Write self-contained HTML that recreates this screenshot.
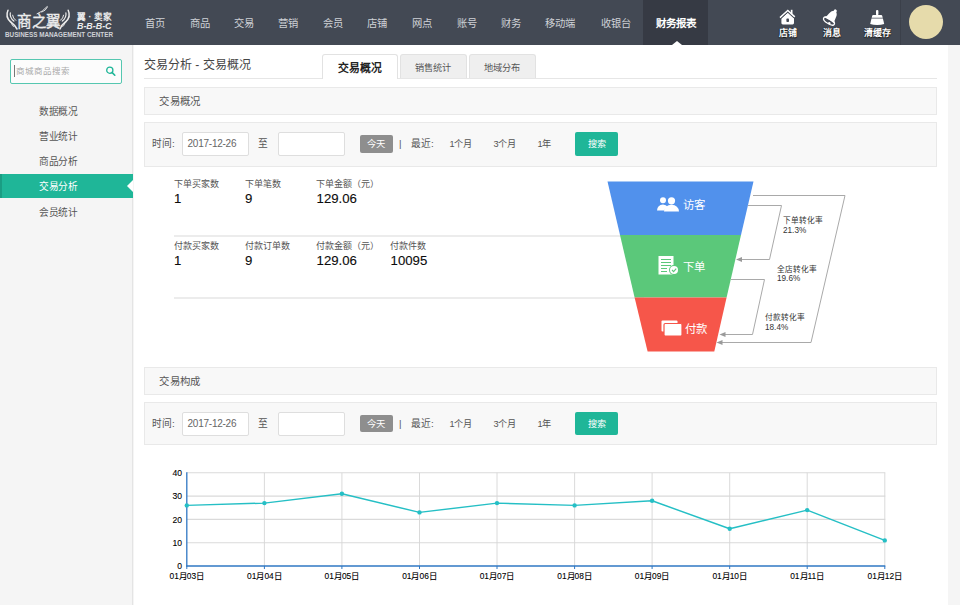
<!DOCTYPE html>
<html lang="zh-CN">
<head>
<meta charset="utf-8">
<title>交易分析 - 交易概况</title>
<style>
*{margin:0;padding:0;box-sizing:border-box;}
html,body{width:960px;height:605px;overflow:hidden;background:#f5f5f5;}
body{font-family:"Liberation Sans",sans-serif;font-size:11px;color:#555;position:relative;}
.abs{position:absolute;}
/* top nav */
#nav{position:absolute;left:0;top:0;width:960px;height:45px;background:#434954;}
#nav .it{position:absolute;top:0;height:45px;line-height:48px;color:#cfd2d7;font-size:10.3px;text-align:center;white-space:nowrap;transform:translateX(-50%);}
#nav .act{position:absolute;left:643px;top:0;width:65px;height:45px;background:#363a44;color:#fff;font-weight:bold;font-size:10.5px;line-height:46px;text-align:center;}
#nav .tri{position:absolute;left:671.5px;top:41px;width:0;height:0;border-left:5px solid transparent;border-right:5px solid transparent;border-bottom:4px solid #fff;}
#nav .ric{position:absolute;top:26.6px;color:#fff;font-size:9px;text-shadow:0 0 1px #000,0 1px 1px #111;font-weight:bold;line-height:12px;white-space:nowrap;transform:translateX(-50%);}
#nav .sep{position:absolute;left:900px;top:0;width:1px;height:45px;background:#3b404a;}
#nav .av{position:absolute;left:909px;top:5px;width:34px;height:34px;border-radius:50%;background:#e6dbab;}
/* sidebar */
#side{position:absolute;left:0;top:45px;width:133px;height:560px;background:#f5f5f5;border-right:1px solid #e4e4e4;}
#side .sb{position:absolute;left:10px;top:14px;width:112px;height:25px;border:1px solid #55c7b0;border-radius:2px;background:#fcfcfc;}
#side .sb span{position:absolute;left:4.6px;top:0;line-height:22.6px;font-size:8.5px;color:#aaa;white-space:nowrap;}
#side .sb i{position:absolute;left:3px;top:5px;width:1px;height:12px;background:#777;}
#side .notch{position:absolute;left:127px;top:135px;width:0;height:0;border-top:6px solid transparent;border-bottom:6px solid transparent;border-right:6px solid #fff;}
#side .m{position:absolute;left:39.3px;font-size:9.7px;letter-spacing:-0.4px;color:#555;line-height:14px;white-space:nowrap;}
#side .on{position:absolute;left:0;top:129px;width:133px;height:24px;background:#1fb698;border-left:2px solid #1a9d83;}
/* main */
#main{position:absolute;left:134px;top:45px;width:814px;height:560px;background:#fff;}
.h1{position:absolute;left:144px;top:57px;font-size:12px;color:#444;line-height:16px;white-space:nowrap;}
.tabline{position:absolute;left:144px;top:78px;width:793px;height:1px;background:#e6e6e6;}
.tab{position:absolute;top:54px;height:24px;border:1px solid #e2e2e2;border-bottom:none;background:#efefef;font-size:9.2px;line-height:26px;text-align:center;color:#555;border-radius:3px 3px 0 0;white-space:nowrap;}
.tab.a{background:#fff;height:25px;color:#222;font-weight:bold;font-size:10.8px;line-height:26px;}
.box{position:absolute;left:144px;width:793px;background:#f8f8f8;border:1px solid #e9e9e9;}
.box .t{position:absolute;left:14.2px;top:0;font-size:10.4px;letter-spacing:0.4px;color:#555;white-space:nowrap;}
.f{position:absolute;font-size:9.7px;color:#555;line-height:14px;white-space:nowrap;}
.inp{position:absolute;width:67px;height:24px;border:1px solid #dedede;border-radius:2px;background:#fff;font-size:10px;letter-spacing:-0.24px;color:#666;line-height:22px;padding-left:5px;}
.btn1{position:absolute;width:32.5px;height:17.5px;background:#8e8e8e;color:#fff;font-size:9.4px;line-height:18px;text-align:center;border-radius:2px;}
.btn2{position:absolute;width:43px;height:23.5px;background:#1fb698;color:#fff;font-size:9.2px;line-height:24px;text-align:center;border-radius:2px;}
.lab{position:absolute;font-size:9px;color:#555;line-height:12px;white-space:nowrap;}
.val{position:absolute;font-size:13.2px;color:#0c0c0c;line-height:15px;white-space:nowrap;-webkit-text-stroke:0.12px #0c0c0c;}
.hr{position:absolute;left:174px;height:1.5px;background:#ececec;}
</style>
</head>
<body>
<div id="nav">
  <svg class="abs" style="left:0;top:0" width="960" height="45" viewBox="0 0 960 45">
    <!-- logo wings -->
    <g fill="none" stroke="#ececec" stroke-linecap="round">
      <path d="M8 10.2 q-3 6.5 2.5 11.5 q4 3.2 6.5 7.3" stroke-width="1.5"/>
      <path d="M10.3 12.8 q-0.8 4.6 3.6 8.2" stroke-width="1.2"/>
      <path d="M12.6 15.2 q0.2 3 3.2 5.2" stroke-width="1"/>
      <path d="M9.6 20.5 q0.2 2.6 2.2 3.2 M11.8 24.3 q0.4 1.8 1.8 2.2" stroke-width="0.9"/>
      <path d="M68.2 10.2 q3 6.5 -2.5 11.5 q-4 3.2 -5.7 7.3" stroke-width="1.5"/>
      <path d="M65.9 12.8 q0.8 4.6 -3.6 8.2" stroke-width="1.2"/>
      <path d="M63.6 15.2 q-0.2 3 -3.2 5.2" stroke-width="1"/>
      <path d="M66.6 20.5 q-0.2 2.6 -2.2 3.2 M64.4 24.3 q-0.4 1.8 -1.8 2.2" stroke-width="0.9"/>
      <path d="M37 13.8 q6-2.4 9.4-6.6 q1.4-1.4 1-0.1 q-1.6 3.6-5.6 5" stroke-width="0.9"/>
    </g>
    <g fill="#ececec" font-family="'Liberation Sans',sans-serif">
      <text x="17" y="27.3" font-size="16" textLength="43.5" lengthAdjust="spacingAndGlyphs" stroke="#ececec" stroke-width="0.35">商之翼</text>
      <g font-weight="bold">
      <text x="77.3" y="20.3" font-size="8.8" textLength="34" lengthAdjust="spacingAndGlyphs">翼 · 卖家</text>
      <text x="77" y="28.5" font-size="8.3" font-style="italic" textLength="34.5" lengthAdjust="spacingAndGlyphs">B-B-B-C</text>
      <text x="5" y="36.9" font-size="6.3" fill="#cfd1d6" textLength="108" lengthAdjust="spacingAndGlyphs">BUSINESS MANAGEMENT CENTER</text>
      </g>
    </g>
    <!-- house -->
    <g>
      <path d="M781.4 18.2 L788 12.6 L794 18.2 v4.8 q0 1.4 -1.4 1.4 h-9.8 q-1.4 0 -1.4 -1.4z" fill="#fff"/>
      <path d="M780 17.6 L787.8 10.4 L794.8 16.9" fill="none" stroke="#fff" stroke-width="1.5"/>
      <path d="M780.6 18.9 L787.8 12.3 L794.6 18.6" fill="none" stroke="#434954" stroke-width="0.9"/>
      <rect x="790.8" y="9.8" width="1.7" height="4.6" fill="#fff"/>
      <rect x="786.4" y="18.6" width="2.6" height="3.4" rx="0.8" fill="#434954"/>
    </g>
    <!-- bell -->
    <g transform="rotate(32 831 17.5)">
      <circle cx="831.2" cy="9.6" r="1.5" fill="#fff"/>
      <path d="M831.2 9.8 q3.6 0.6 4 5.4 q0.2 3.6 1.8 5.6 h-11.6 q1.6-2 1.8-5.6 q0.4-4.8 4-5.4z" fill="#fff"/>
      <ellipse cx="831.2" cy="21.6" rx="6.2" ry="2.6" fill="none" stroke="#fff" stroke-width="1.3"/>
      <ellipse cx="831.2" cy="22" rx="4.4" ry="1.3" fill="#434954"/>
      <circle cx="832.6" cy="23.3" r="1.3" fill="#fff"/>
    </g>
    <!-- broom -->
    <g fill="#fff">
      <rect x="876" y="10" width="2.4" height="5.2" rx="1"/>
      <path d="M873.2 15 h8 q0.8 0 1 0.8 l0.5 1.9 h-11 l0.5-1.9 q0.2-0.8 1-0.8z"/>
      <path d="M871.5 18.6 h11.4 l1.3 5.4 q-3 0.9 -7 0.9 q-4 0 -7-0.9z"/>
    </g>
  </svg>
  <div class="it" style="left:155.4px">首页</div>
  <div class="it" style="left:199.6px">商品</div>
  <div class="it" style="left:244px">交易</div>
  <div class="it" style="left:288.3px">营销</div>
  <div class="it" style="left:333px">会员</div>
  <div class="it" style="left:377.4px">店铺</div>
  <div class="it" style="left:422px">网点</div>
  <div class="it" style="left:466.7px">账号</div>
  <div class="it" style="left:511.2px">财务</div>
  <div class="it" style="left:560.2px">移动端</div>
  <div class="it" style="left:615.5px">收银台</div>
  <div class="act">财务报表</div>
  <div class="tri"></div>
  <div class="ric" style="left:788px">店铺</div>
  <div class="ric" style="left:832px">消息</div>
  <div class="ric" style="left:877px">清缓存</div>
  <div class="sep"></div>
  <div class="av"></div>
</div>

<div id="side">
  <div class="sb"><i></i><span>商城商品搜索</span><svg class="abs" style="left:94px;top:5px" width="14" height="14" viewBox="0 0 14 14"><circle cx="4.8" cy="5.2" r="3.1" fill="none" stroke="#1fb698" stroke-width="1.3"/><line x1="7.2" y1="7.6" x2="9.8" y2="10.2" stroke="#1fb698" stroke-width="1.6" stroke-linecap="round"/></svg></div>
  <div class="m" style="top:59.7px">数据概况</div>
  <div class="m" style="top:84.7px">营业统计</div>
  <div class="m" style="top:109.7px">商品分析</div>
  <div class="on"></div><div class="notch"></div>
  <div class="m" style="top:134.7px;color:#fff">交易分析</div>
  <div class="m" style="top:160.7px">会员统计</div>
</div>

<div id="main"></div>
<div class="h1">交易分析 - 交易概况</div>
<div class="tabline"></div>
<div class="tab a" style="left:322px;width:76px">交易概况</div>
<div class="tab" style="left:399.6px;width:67px">销售统计</div>
<div class="tab" style="left:468.7px;width:67px">地域分布</div>

<!-- section 1 -->
<div class="box" style="top:87px;height:28px"><div class="t" style="line-height:28px">交易概况</div></div>
<div class="box" style="top:122px;height:44.5px"></div>
<div class="f" style="left:152px;top:137px">时间:</div>
<div class="inp" style="left:181.5px;top:132px">2017-12-26</div>
<div class="f" style="left:258px;top:137px">至</div>
<div class="inp" style="left:278px;top:132px"></div>
<div class="btn1" style="left:360px;top:135px">今天</div>
<div class="f" style="left:399px;top:137px">|</div>
<div class="f" style="left:411px;top:137px">最近:</div>
<div class="f" style="left:449.6px;top:137px;font-size:9.2px;letter-spacing:-0.35px">1个月</div>
<div class="f" style="left:493.6px;top:137px;font-size:9.2px;letter-spacing:-0.35px">3个月</div>
<div class="f" style="left:537.6px;top:137px;font-size:9.2px;letter-spacing:-0.35px">1年</div>
<div class="btn2" style="left:575px;top:132px">搜索</div>

<div class="lab" style="left:174px;top:177.7px">下单买家数</div>
<div class="lab" style="left:245px;top:177.7px">下单笔数</div>
<div class="lab" style="left:316px;top:177.7px">下单金额（元）</div>
<div class="val" style="left:174px;top:191px">1</div>
<div class="val" style="left:245px;top:191px">9</div>
<div class="val" style="left:316.6px;top:191px">129.06</div>
<div class="hr" style="top:235.2px;width:470px"></div>
<div class="lab" style="left:174px;top:240.1px">付款买家数</div>
<div class="lab" style="left:245px;top:240.1px">付款订单数</div>
<div class="lab" style="left:316px;top:240.1px">付款金额（元）</div>
<div class="lab" style="left:390px;top:240.1px">付款件数</div>
<div class="val" style="left:174px;top:252.8px">1</div>
<div class="val" style="left:245px;top:252.8px">9</div>
<div class="val" style="left:316.6px;top:252.8px">129.06</div>
<div class="val" style="left:390.6px;top:252.8px">10095</div>
<div class="hr" style="top:297.2px;width:470px"></div>

<!-- FUNNEL -->
<svg class="abs" style="left:600px;top:175px" width="260" height="185" viewBox="600 175 260 185">
  <polygon points="607.5,181.5 753.5,181.5 741,235 620,235" fill="#5191ec"/>
  <polygon points="620,235 741,235 726.6,297.5 634.6,297.5" fill="#5bc87a"/>
  <polygon points="634.6,297.5 726.6,297.5 714.3,351.5 647.6,351.5" fill="#f6564a"/>
  <g fill="none" stroke="#a9a9a9" stroke-width="1">
    <polyline points="748,205.5 781.5,205.5 769.5,259.5 741,259.5"/>
    <polyline points="753,195.5 845,195.5 811,342.5 721,342.5"/>
    <polyline points="731,279.5 764.5,279.5 752.5,334.5 724,334.5"/>
  </g>
  <g fill="#9a9a9a">
    <polygon points="736,259.5 742,257 742,262"/>
    <polygon points="716.5,342.5 722.5,340 722.5,345"/>
    <polygon points="719.5,334.5 725.5,332 725.5,337"/>
  </g>
  <!-- visitors icon -->
  <g fill="#fff">
    <circle cx="663" cy="200.3" r="3"/>
    <path d="M657 210.5 q0.4-5.6 6-6 q3.2 0.2 4.6 2.2 q-3 1.6-3.3 3.8z"/>
    <circle cx="671.5" cy="200.8" r="3.6"/>
    <path d="M664 211.5 q0.5-6.4 7.5-6.8 q7 0.4 7.5 6.8z"/>
  </g>
  <!-- order icon -->
  <g>
    <rect x="658.5" y="256" width="15" height="18.5" fill="#fff"/>
    <g stroke="#5bc87a" stroke-width="1">
      <line x1="661" y1="259.5" x2="671" y2="259.5"/>
      <line x1="661" y1="262.5" x2="671" y2="262.5"/>
      <line x1="661" y1="265.5" x2="671" y2="265.5"/>
      <line x1="661" y1="268.5" x2="667" y2="268.5"/>
      <line x1="661" y1="271.5" x2="667" y2="271.5"/>
    </g>
    <circle cx="674" cy="270" r="5" fill="#5bc87a"/>
    <circle cx="674" cy="270" r="4" fill="#fff"/>
    <polyline points="672,270 673.6,271.6 676.2,268.6" fill="none" stroke="#5bc87a" stroke-width="1.1"/>
  </g>
  <!-- pay icon -->
  <g>
    <rect x="661.5" y="320.5" width="16" height="11" rx="1" fill="#fff"/>
    <rect x="664" y="323.5" width="18" height="12.5" rx="1.2" fill="#fff" stroke="#f6564a" stroke-width="1.2"/>
  </g>
  <g fill="#fff" font-size="11.4" font-family="'Liberation Sans',sans-serif">
    <text x="683" y="209">访客</text>
    <text x="683" y="271">下单</text>
    <text x="685" y="333">付款</text>
  </g>
  <g fill="#333" font-size="7.7" font-family="'Liberation Sans',sans-serif">
    <text x="783" y="223">下单转化率</text>
    <text x="783" y="233" font-size="8.2">21.3%</text>
    <text x="777" y="272">全店转化率</text>
    <text x="777" y="281" font-size="8.2">19.6%</text>
    <text x="765" y="320">付款转化率</text>
    <text x="765" y="330" font-size="8.2">18.4%</text>
  </g>
</svg>

<!-- section 2 -->
<div class="box" style="top:366.5px;height:28px"><div class="t" style="line-height:28px">交易构成</div></div>
<div class="box" style="top:401.5px;height:43.5px"></div>
<div class="f" style="left:152px;top:416.6px">时间:</div>
<div class="inp" style="left:181.5px;top:411.5px">2017-12-26</div>
<div class="f" style="left:258px;top:416.6px">至</div>
<div class="inp" style="left:278px;top:411.5px"></div>
<div class="btn1" style="left:360px;top:414.7px">今天</div>
<div class="f" style="left:399px;top:416.6px">|</div>
<div class="f" style="left:411px;top:416.6px">最近:</div>
<div class="f" style="left:449.6px;top:416.6px;font-size:9.2px;letter-spacing:-0.35px">1个月</div>
<div class="f" style="left:493.6px;top:416.6px;font-size:9.2px;letter-spacing:-0.35px">3个月</div>
<div class="f" style="left:537.6px;top:416.6px;font-size:9.2px;letter-spacing:-0.35px">1年</div>
<div class="btn2" style="left:575px;top:411.5px">搜索</div>

<!-- CHART -->
<svg class="abs" style="left:134px;top:455px" width="814" height="150" viewBox="134 455 814 150">
  <g stroke="#dadada" stroke-width="1.1">
    <line x1="186.8" y1="542.7" x2="885.3" y2="542.7"/>
    <line x1="186.8" y1="519.4" x2="885.3" y2="519.4"/>
    <line x1="186.8" y1="496.1" x2="885.3" y2="496.1"/>
    <line x1="186.8" y1="472.8" x2="885.3" y2="472.8"/>
  </g>
  <g stroke="#d6d6d6" stroke-width="0.9">
    <line x1="264.4" y1="472.8" x2="264.4" y2="566.0"/>
    <line x1="341.9" y1="472.8" x2="341.9" y2="566.0"/>
    <line x1="419.5" y1="472.8" x2="419.5" y2="566.0"/>
    <line x1="497.0" y1="472.8" x2="497.0" y2="566.0"/>
    <line x1="574.6" y1="472.8" x2="574.6" y2="566.0"/>
    <line x1="652.1" y1="472.8" x2="652.1" y2="566.0"/>
    <line x1="729.7" y1="472.8" x2="729.7" y2="566.0"/>
    <line x1="807.2" y1="472.8" x2="807.2" y2="566.0"/>
    <line x1="884.8" y1="472.8" x2="884.8" y2="566.0"/>
  </g>
  <g stroke="#2f77c3" stroke-width="1">
    <line x1="186.8" y1="566.0" x2="186.8" y2="569.0"/>
    <line x1="264.4" y1="566.0" x2="264.4" y2="569.0"/>
    <line x1="341.9" y1="566.0" x2="341.9" y2="569.0"/>
    <line x1="419.5" y1="566.0" x2="419.5" y2="569.0"/>
    <line x1="497.0" y1="566.0" x2="497.0" y2="569.0"/>
    <line x1="574.6" y1="566.0" x2="574.6" y2="569.0"/>
    <line x1="652.1" y1="566.0" x2="652.1" y2="569.0"/>
    <line x1="729.7" y1="566.0" x2="729.7" y2="569.0"/>
    <line x1="807.2" y1="566.0" x2="807.2" y2="569.0"/>
    <line x1="884.8" y1="566.0" x2="884.8" y2="569.0"/>
  </g>
  <line x1="186.8" y1="472.3" x2="186.8" y2="566.6" stroke="#2f77c3" stroke-width="1.3"/>
  <line x1="186.20000000000002" y1="566.0" x2="885.3" y2="566.0" stroke="#2f77c3" stroke-width="1.3"/>
  <polyline fill="none" stroke="#25bfc5" stroke-width="1.45" stroke-linejoin="round" points="186.8,505.4 264.4,503.1 341.9,493.8 419.5,512.4 497.0,503.1 574.6,505.4 652.1,500.8 729.7,528.7 807.2,510.1 884.8,540.4"/>
  <g fill="#25bfc5">
    <circle cx="186.8" cy="505.4" r="2.2"/>
    <circle cx="264.4" cy="503.1" r="2.2"/>
    <circle cx="341.9" cy="493.8" r="2.2"/>
    <circle cx="419.5" cy="512.4" r="2.2"/>
    <circle cx="497.0" cy="503.1" r="2.2"/>
    <circle cx="574.6" cy="505.4" r="2.2"/>
    <circle cx="652.1" cy="500.8" r="2.2"/>
    <circle cx="729.7" cy="528.7" r="2.2"/>
    <circle cx="807.2" cy="510.1" r="2.2"/>
    <circle cx="884.8" cy="540.4" r="2.2"/>
  </g>
  <g fill="#000" stroke="#000" stroke-width="0.1" font-size="8.6" font-family="'Liberation Sans',sans-serif" text-anchor="end">
    <text x="182" y="569.1">0</text>
    <text x="182" y="545.8">10</text>
    <text x="182" y="522.5">20</text>
    <text x="182" y="499.2">30</text>
    <text x="182" y="475.9">40</text>
  </g>
  <g fill="#000" stroke="#000" stroke-width="0.1" font-size="8.4" font-family="'Liberation Sans',sans-serif" text-anchor="middle">
    <text x="186.8" y="579">01月03日</text>
    <text x="264.4" y="579">01月04日</text>
    <text x="341.9" y="579">01月05日</text>
    <text x="419.5" y="579">01月06日</text>
    <text x="497.0" y="579">01月07日</text>
    <text x="574.6" y="579">01月08日</text>
    <text x="652.1" y="579">01月09日</text>
    <text x="729.7" y="579">01月10日</text>
    <text x="807.2" y="579">01月11日</text>
    <text x="884.8" y="579">01月12日</text>
  </g>
</svg>

</body>
</html>
